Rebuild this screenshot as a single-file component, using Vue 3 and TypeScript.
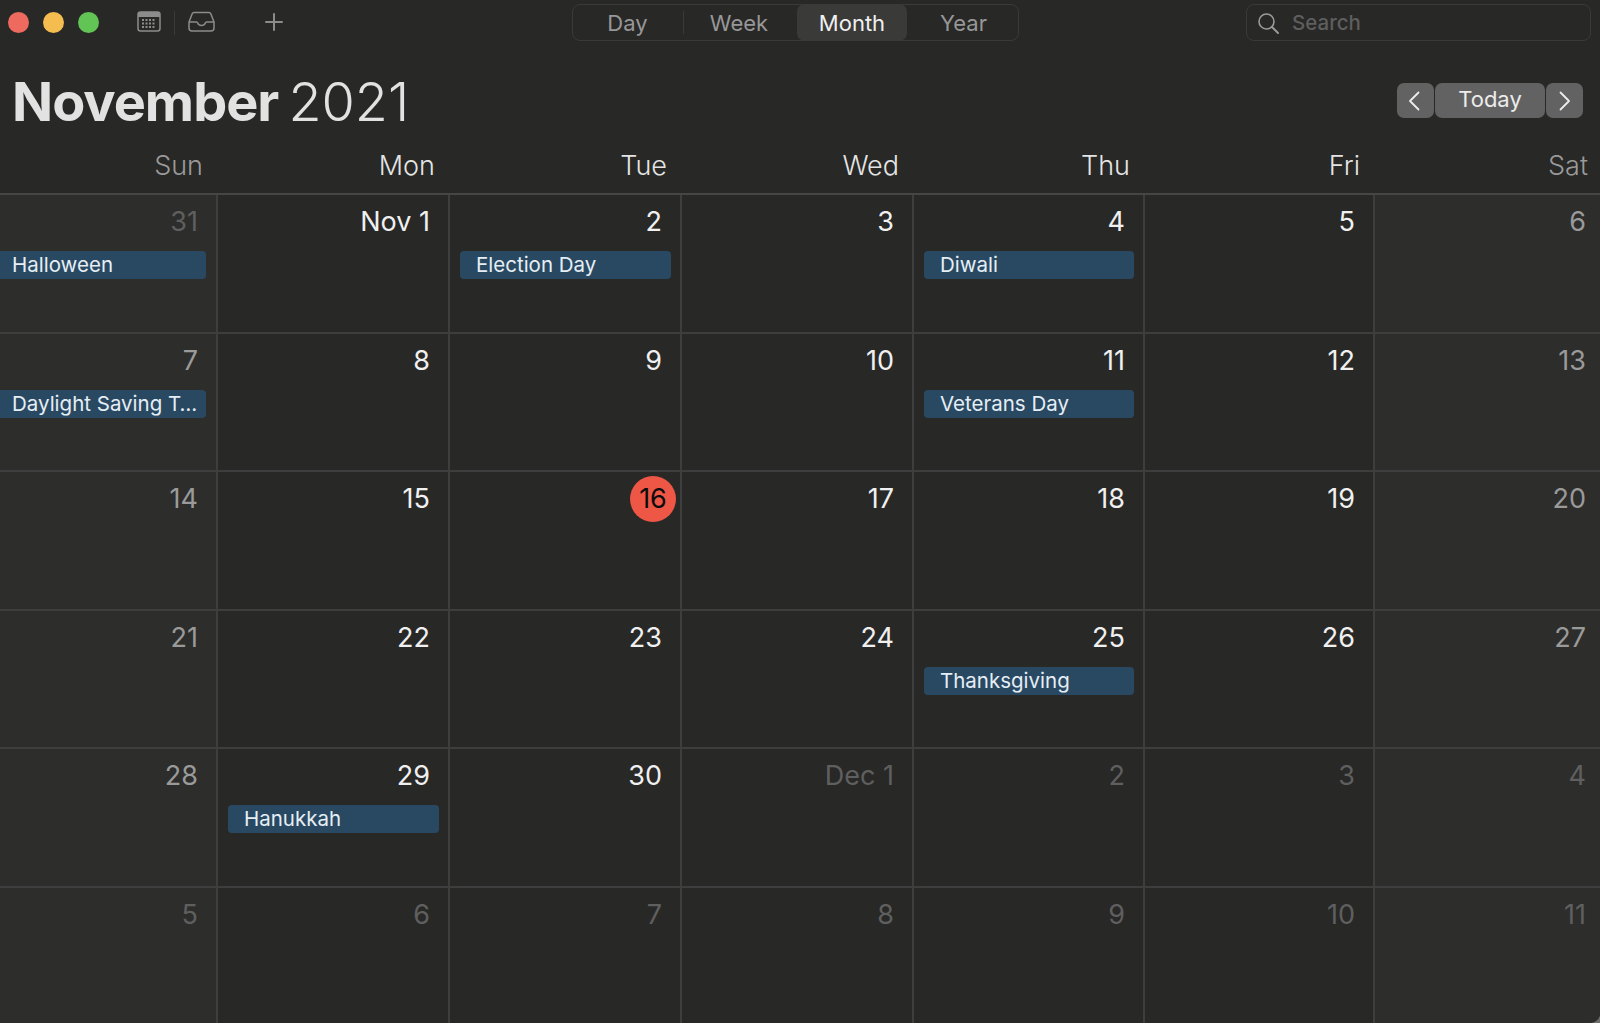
<template>
  <div class="calendar">
    <!-- toolbar -->
    <div class="toolbar">
      <div class="left-tools">
        <span class="light red"></span>
        <span class="light yellow"></span>
        <span class="light green"></span>
        <svg class="tool-cal" width="24" height="21" viewBox="0 0 24 21">
          <rect x="1" y="1" width="22" height="19" rx="2.5" fill="none" stroke="#8c8c8c" stroke-width="1.5" />
          <path d="M1 3.5a2.5 2.5 0 0 1 2.5-2.5h17a2.5 2.5 0 0 1 2.5 2.5V6H1z" fill="#8c8c8c" />
          <g fill="#8c8c8c">
            <rect v-for="d in calDots" :key="d.x + '-' + d.y" :x="d.x" :y="d.y" width="2" height="2" />
          </g>
        </svg>
        <span class="tool-sep"></span>
        <svg class="tool-inbox" width="27" height="21" viewBox="0 0 27 21" fill="none" stroke="#8c8c8c" stroke-width="1.5" stroke-linejoin="round">
          <path d="M6 1.5h15a2 2 0 0 1 1.8 1.2L26 11v6a3 3 0 0 1-3 3H4a3 3 0 0 1-3-3v-6l3.200-8.300A2 2 0 0 1 6 1.500z" />
          <path d="M1 11h7.500c.8 0 1 .5 1.300 1.200.5 1.300 1.700 2.300 3.700 2.300s3.200-1 3.700-2.300c.3-.7.5-1.200 1.300-1.200H26" />
        </svg>
        <svg class="tool-plus" width="18" height="18" viewBox="0 0 18 18" stroke="#8c8c8c" stroke-width="2" stroke-linecap="round">
          <path d="M9 1v16M1 9h16" />
        </svg>
      </div>
      <div class="segments">
        <span class="seg sep-right">Day</span>
        <span class="seg">Week</span>
        <span class="seg active">Month</span>
        <span class="seg">Year</span>
      </div>
      <div class="search">
        <svg width="22" height="22" viewBox="0 0 22 22" fill="none" stroke="#9a9a9a" stroke-width="1.600" stroke-linecap="round">
          <circle cx="9.500" cy="9.500" r="7.500" />
          <path d="M15 15l6 6" stroke-width="2" />
        </svg>
        <span>Search</span>
      </div>
    </div>

    <!-- title -->
    <div class="title-row">
      <h1><b>November</b> <span>2021</span></h1>
      <div class="nav">
        <button class="nav-btn prev">
          <svg width="12" height="20" viewBox="0 0 12 20" fill="none" stroke="#ececec" stroke-width="1.800" stroke-linecap="round" stroke-linejoin="round"><path d="M10.500 1.500L2 10l8.500 8.500" /></svg>
        </button>
        <button class="nav-btn today-btn">Today</button>
        <button class="nav-btn">
          <svg width="12" height="20" viewBox="0 0 12 20" fill="none" stroke="#ececec" stroke-width="1.800" stroke-linecap="round" stroke-linejoin="round"><path d="M1.500 1.500L10 10l-8.500 8.500" /></svg>
        </button>
      </div>
    </div>

    <!-- weekday header -->
    <div class="week-head">
      <div v-for="(w, i) in weekdays" :key="w" class="week-label" :class="{ weekend: i === 0 || i === 6 }">{{ w }}</div>
    </div>

    <!-- month grid -->
    <div class="grid">
      <div v-for="(c, i) in cells" :key="i" class="cell" :class="{ weekend: i % 7 === 0 || i % 7 === 6 }">
        <div class="date" :class="{ dim: c.dim, muted: !c.dim && (i % 7 === 0 || i % 7 === 6) }">
          <span :class="{ 'today-mark': c.today }">{{ c.label }}</span>
        </div>
        <div v-if="c.event" class="event" :class="{ bleed: i % 7 === 0 }">{{ c.event }}</div>
      </div>
    </div>
  </div>
</template>

<script setup lang="ts">
interface Cell {
  label: string
  dim?: boolean
  today?: boolean
  event?: string
}

const weekdays = ['Sun', 'Mon', 'Tue', 'Wed', 'Thu', 'Fri', 'Sat']

const calDots: { x: number; y: number }[] = []
for (let y = 8; y <= 16; y += 3.5) {
  for (let x = 5; x <= 18; x += 3.5) {
    calDots.push({ x, y })
  }
}

const events: Record<number, string> = {
  0: 'Halloween',
  2: 'Election Day',
  4: 'Diwali',
  7: 'Daylight Saving T…',
  11: 'Veterans Day',
  25: 'Thanksgiving',
  29: 'Hanukkah'
}

const labels = [
  '31', 'Nov 1', '2', '3', '4', '5', '6',
  '7', '8', '9', '10', '11', '12', '13',
  '14', '15', '16', '17', '18', '19', '20',
  '21', '22', '23', '24', '25', '26', '27',
  '28', '29', '30', 'Dec 1', '2', '3', '4',
  '5', '6', '7', '8', '9', '10', '11'
]

const cells: Cell[] = labels.map((label, i) => ({
  label,
  dim: i === 0 || i >= 31,
  today: i === 16,
  event: events[i]
}))
</script>

<style>
html,
body {
  margin: 0;
  background: #6e6e6e;
  overflow: hidden;
}
</style>

<style scoped>
.calendar {
  width: 1600px;
  height: 1023px;
  overflow: hidden;
  background: #282827;
  border-bottom-right-radius: 10px;
  font-family: Inter, "Liberation Sans", sans-serif;
  color: #e4e4e4;
}

.toolbar {
  display: flex;
  align-items: flex-start;
  padding: 4px 9px 0 0;
  height: 44px;
}

.left-tools {
  display: flex;
  align-items: center;
  width: 572px;
  height: 37px;
  padding-left: 8px;
  box-sizing: border-box;
}

.light {
  width: 21px;
  height: 21px;
  border-radius: 50%;
  margin-right: 14px;
}

.red { background: #ee6a5f; }
.yellow { background: #f5bd4f; }
.green { background: #61c454; }

.left-tools svg { margin-bottom: 2px; }

.tool-cal { margin-left: 24px; }

.tool-sep {
  width: 1px;
  height: 24px;
  background: #3a3a3a;
  margin: 0 13px;
}

.tool-plus { margin-left: 50px; }

.segments {
  display: flex;
  align-items: center;
  width: 447px;
  height: 37px;
  box-sizing: border-box;
  border: 1px solid #3a3a3a;
  border-radius: 8px;
  font-size: 22px;
  color: #979797;
}

.seg {
  height: 37px;
  display: flex;
  align-items: center;
  justify-content: center;
  width: 110px;
  box-sizing: border-box;
  position: relative;
}

.seg:first-child { width: 111px; padding-right: 2px; }
.seg:nth-child(2) { width: 113px; padding-right: 3px; }
.seg:last-child { flex: 1; padding-left: 2px; }

.sep-right::after {
  content: '';
  position: absolute;
  right: 0;
  top: 7px;
  height: 23px;
  width: 1px;
  background: #3a3a3a;
}

.seg.active {
  background: #3a3a39;
  color: #f0f0f0;
  border-radius: 8px;
}

.search {
  display: flex;
  align-items: center;
  gap: 13px;
  margin-left: auto;
  width: 345px;
  height: 37px;
  box-sizing: border-box;
  border: 1px solid #3a3a3a;
  border-radius: 8px;
  padding-left: 10px;
  font-size: 20.5px;
  font-weight: 500;
  color: #5e5e5e;
}

.title-row {
  display: flex;
  justify-content: space-between;
  align-items: flex-start;
  height: 93px;
  padding: 24px 17px 0 12px;
  box-sizing: border-box;
}

h1 {
  margin: 0;
  font-size: 54px;
  line-height: 60px;
  font-weight: 300;
  word-spacing: -5px;
  color: #e2e2e2;
}

h1 b {
  font-weight: 700;
  letter-spacing: -1px;
}

h1 span { letter-spacing: -0.1px; }

.nav {
  display: flex;
  gap: 1px;
  margin-top: 11px;
}

.nav-btn {
  display: flex;
  align-items: center;
  justify-content: center;
  width: 37px;
  height: 35px;
  padding: 0;
  border: none;
  border-radius: 7px;
  background: #626262;
  color: #ececec;
  font: inherit;
  font-size: 22px;
}

.nav-btn.prev { padding-right: 3px; }
.nav-btn.today-btn { width: 110px; padding-bottom: 3px; }

.week-head {
  display: grid;
  grid-template-columns: 218px 232px 232px 232px 231px 230px 1fr;
  height: 54px;
  border-bottom: 2px solid #464646;
  box-sizing: border-box;
}

.week-label {
  text-align: right;
  font-size: 27px;
  line-height: 36px;
  padding-right: 15px;
  margin-top: 7px;
  font-weight: 300;
  color: #e4e4e4;
}

.week-label:last-child { padding-right: 12px; }
.week-label.weekend { color: #9a9a9a; }

.grid {
  display: grid;
  grid-template-columns: 218px 232px 232px 232px 231px 230px 1fr;
  grid-auto-rows: 138.6px;
}

.cell {
  border-right: 2px solid #3e3e3e;
  border-bottom: 2px solid #3e3e3e;
  box-sizing: border-box;
  padding: 9px 0 0;
  min-width: 0;
}

.cell.weekend { background: #2d2d2c; }
.cell:nth-child(7n) { border-right: none; }

.date {
  text-align: right;
  font-size: 27px;
  line-height: 36px;
  padding-right: 18px;
  color: #f0f0f0;
}

.cell:nth-child(7n) .date { padding-right: 14px; }

.date.muted { color: #9a9a9a; }
.date.dim { color: #5f5f5f; }

.today-mark {
  display: inline-block;
  width: 46px;
  height: 46px;
  line-height: 46px;
  margin: -5px -14px -5px 0;
  border-radius: 50%;
  background: #ee5646;
  color: #0c0c0c;
  text-align: center;
}

.event {
  margin: 11px 9px 0 10px;
  height: 28px;
  line-height: 28px;
  padding-left: 16px;
  border-radius: 4px;
  background: #294962;
  color: #e6eef5;
  font-size: 20.5px;
  white-space: nowrap;
  overflow: hidden;
}

.event.bleed {
  margin-left: 0;
  margin-right: 10px;
  padding-left: 12px;
  border-radius: 0 4px 4px 0;
}
</style>
